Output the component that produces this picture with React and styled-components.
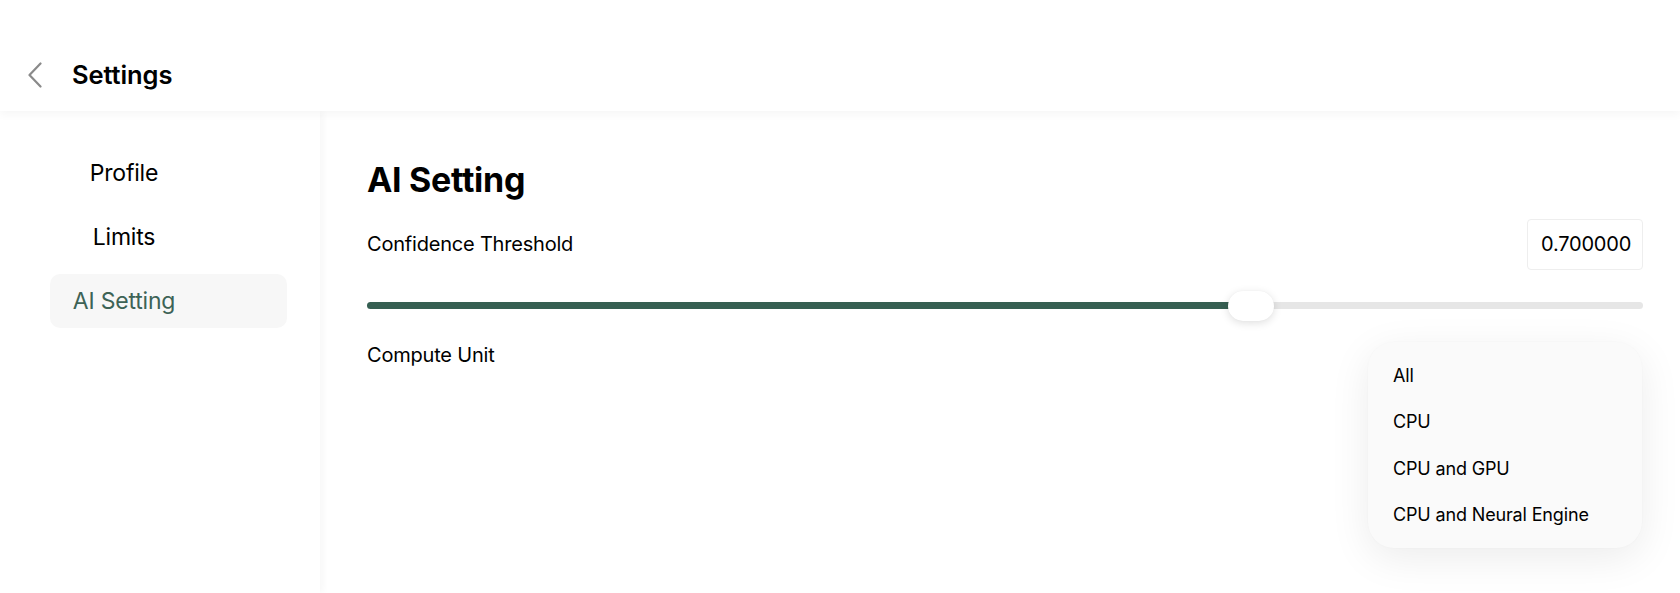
import React, { useState } from 'react';
import styled, { createGlobalStyle } from 'styled-components';

const GlobalStyle = createGlobalStyle`
  html, body {
    margin: 0;
    padding: 0;
    background: #ffffff;
    font-family: Inter, "Noto Sans", "Liberation Sans", sans-serif;
    color: #000;
  }
`;

const Page = styled.div`
  display: flex;
  flex-direction: column;
  height: 593px;
  overflow: hidden;
`;

const Header = styled.header`
  position: relative;
  z-index: 2;
  display: flex;
  align-items: center;
  gap: 29px;
  height: 111px;
  box-sizing: border-box;
  padding: 38px 0 0 27px;
  background: #fff;
  box-shadow: 0 4px 8px rgba(0, 0, 0, 0.035);
`;

const BackButton = styled.button`
  display: flex;
  align-items: center;
  padding: 0;
  border: 0;
  background: none;
  color: #8a8a8a;
  cursor: pointer;
`;

const Title = styled.h1`
  margin: 0;
  font-size: 25.5px;
  font-weight: 600;
  letter-spacing: -0.1px;
  color: #000;
`;

const Body = styled.div`
  flex: 1;
  display: flex;
  min-height: 0;
`;

const Sidebar = styled.nav`
  position: relative;
  z-index: 1;
  width: 320px;
  flex-shrink: 0;
  box-sizing: border-box;
  padding: 35px 0 0 50px;
  display: flex;
  flex-direction: column;
  gap: 10px;
  background: #fff;
  box-shadow: 3px 0 7px rgba(0, 0, 0, 0.035);
`;

const NavItem = styled.div`
  width: 237px;
  height: 54px;
  box-sizing: border-box;
  padding-left: 21px;
  display: flex;
  align-items: center;
  border-radius: 10px;
  background: ${(p) => (p.$active ? '#f7f7f7' : 'transparent')};
  color: ${(p) => (p.$active ? '#3d6356' : '#000')};
  cursor: pointer;
`;

const NavLabel = styled.span`
  display: inline-block;
  width: 106px;
  text-align: center;
  white-space: nowrap;
  font-size: 23px;
  letter-spacing: -0.2px;
`;

const Main = styled.main`
  position: relative;
  flex: 1;
  box-sizing: border-box;
  padding: 49px 37px 0 47px;
  background: #fff;
`;

const SectionTitle = styled.h2`
  margin: 0 0 19px;
  font-size: 34px;
  line-height: 39.6px;
  font-weight: 700;
  letter-spacing: -0.3px;
  color: #000;
`;

const Row = styled.div`
  display: flex;
  align-items: center;
  justify-content: space-between;
  height: ${(p) => p.$height || 'auto'};
`;

const Label = styled.span`
  font-size: 20px;
  line-height: 24px;
  letter-spacing: -0.2px;
  color: #000;
`;

const ValueBox = styled.div`
  width: 116px;
  height: 51px;
  box-sizing: border-box;
  display: flex;
  align-items: center;
  padding-left: 13px;
  border: 1px solid #eeeeee;
  border-radius: 4px;
  font-size: 20px;
  letter-spacing: -0.2px;
  color: #000;
`;

const SliderWrap = styled.div`
  position: relative;
  height: 30px;
  margin: 21px 0 22px;
  display: flex;
  align-items: center;
`;

const Track = styled.div`
  position: relative;
  width: 100%;
  height: 7px;
  border-radius: 4px;
  background: #e6e6e6;
`;

const Fill = styled.div`
  position: absolute;
  left: 0;
  top: 0;
  bottom: 0;
  border-radius: 4px 0 0 4px;
  background: #365f52;
`;

const Thumb = styled.div`
  position: absolute;
  top: 0;
  width: 46px;
  height: 30px;
  border-radius: 15px;
  background: #fff;
  box-shadow: 0 2px 8px rgba(0, 0, 0, 0.13), 0 0 1px rgba(0, 0, 0, 0.06);
`;

const Menu = styled.ul`
  position: absolute;
  top: 231px;
  right: 38px;
  width: 274px;
  margin: 0;
  padding: 10px 0;
  list-style: none;
  box-sizing: border-box;
  border-radius: 26px;
  background: #fafafa;
  box-shadow: 0 10px 40px rgba(0, 0, 0, 0.08), 0 0 2px rgba(0, 0, 0, 0.03);
`;

const MenuItem = styled.li`
  height: 46.5px;
  display: flex;
  align-items: center;
  padding-left: 25px;
  font-size: 18px;
  letter-spacing: -0.15px;
  color: #000;
  cursor: pointer;
`;

const ChevronLeft = () => (
  <svg width="16" height="26" viewBox="0 0 16 26" fill="none">
    <path
      d="M13.5 1.5 L2.5 13 L13.5 24.5"
      stroke="currentColor"
      strokeWidth="2.2"
      strokeLinecap="round"
      strokeLinejoin="round"
    />
  </svg>
);

const navItems = ['Profile', 'Limits', 'AI Setting'];
const computeUnits = ['All', 'CPU', 'CPU and GPU', 'CPU and Neural Engine'];

function ThresholdSlider({ value }) {
  return (
    <SliderWrap>
      <Track>
        <Fill style={{ width: `calc((100% - 46px) * ${value} + 4px)` }} />
      </Track>
      <Thumb style={{ left: `calc((100% - 46px) * ${value})` }} />
    </SliderWrap>
  );
}

export default function App() {
  const [active] = useState('AI Setting');
  const [threshold] = useState(0.7);

  return (
    <Page>
      <GlobalStyle />
      <Header>
        <BackButton aria-label="Back">
          <ChevronLeft />
        </BackButton>
        <Title>Settings</Title>
      </Header>
      <Body>
        <Sidebar>
          {navItems.map((item) => (
            <NavItem key={item} $active={item === active}>
              <NavLabel>{item}</NavLabel>
            </NavItem>
          ))}
        </Sidebar>
        <Main>
          <SectionTitle>AI Setting</SectionTitle>
          <Row $height="51px">
            <Label>Confidence Threshold</Label>
            <ValueBox>{threshold.toFixed(6)}</ValueBox>
          </Row>
          <ThresholdSlider value={threshold} />
          <Row>
            <Label>Compute Unit</Label>
          </Row>
          <Menu>
            {computeUnits.map((unit) => (
              <MenuItem key={unit}>{unit}</MenuItem>
            ))}
          </Menu>
        </Main>
      </Body>
    </Page>
  );
}
